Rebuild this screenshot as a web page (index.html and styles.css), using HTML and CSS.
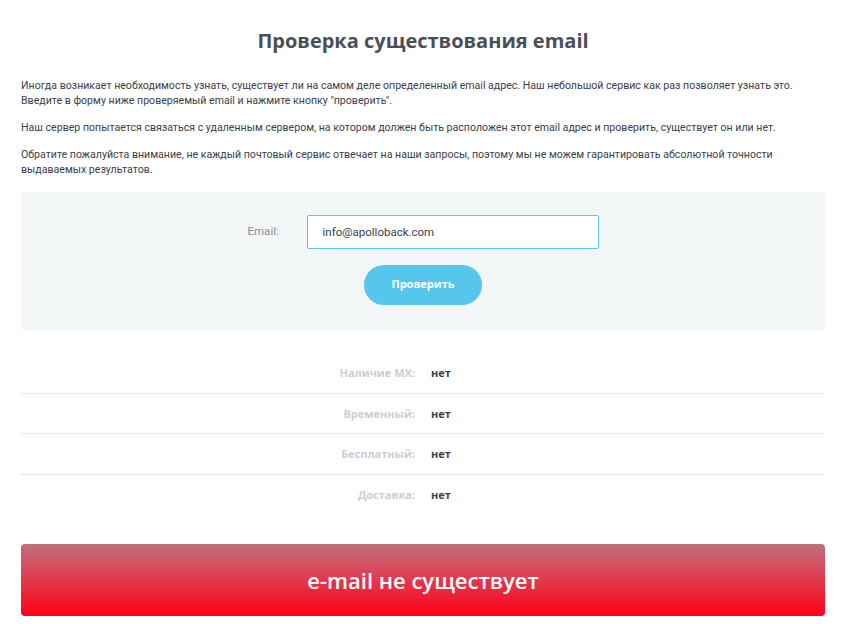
FILE: index.html
```html
<!DOCTYPE html>
<html lang="ru">
<head>
    <meta charset="UTF-8">
    <title>Проверка существования email</title>
    <link rel="stylesheet" href="styles.css">
</head>
<body>
    <div class="container">
        <h1 class="title">Проверка существования email</h1>

        <div class="intro">
            <p>Иногда возникает необходимость узнать, существует ли на самом деле определенный email адрес. Наш небольшой сервис как раз позволяет узнать это.<br>Введите в форму ниже проверяемый email и нажмите кнопку "проверить".</p>
            <p>Наш сервер попытается связаться с удаленным сервером, на котором должен быть расположен этот email адрес и проверить, существует он или нет.</p>
            <p>Обратите пожалуйста внимание, не каждый почтовый сервис отвечает на наши запросы, поэтому мы не можем гарантировать абсолютной точности выдаваемых результатов.</p>
        </div>

        <!-- Check form -->
        <form class="check-form">
            <div class="form-row">
                <label for="email">Email:</label>
                <input type="text" id="email" value="info@apolloback.com">
            </div>
            <button type="button" class="btn">Проверить</button>
        </form>

        <!-- Results -->
        <div class="results">
            <div class="result-row"><span class="result-label">Наличие MX:</span><span class="result-value">нет</span></div>
            <div class="result-row"><span class="result-label">Временный:</span><span class="result-value">нет</span></div>
            <div class="result-row"><span class="result-label">Бесплатный:</span><span class="result-value">нет</span></div>
            <div class="result-row"><span class="result-label">Доставка:</span><span class="result-value">нет</span></div>
        </div>

        <div class="verdict">e-mail не существует</div>
    </div>
</body>
</html>
```

FILE: styles.css
```css
* {
    margin: 0;
    padding: 0;
    box-sizing: border-box;
}

body {
    font-family: Roboto, 'Noto Sans', sans-serif;
    background: #fff;
    color: #3b4049;
}

.container {
    width: 804px;
    margin-left: 21px;
    padding-top: 27px;
}

.title {
    font-family: 'Open Sans', sans-serif;
    font-size: 20px;
    font-weight: 700;
    color: #4a4f57;
    text-align: center;
    line-height: 28px;
    margin-bottom: 23px;
}

.intro p {
    font-size: 10.6px;
    line-height: 15px;
    color: #3b4049;
    margin-bottom: 12px;
}

.intro p:last-child {
    margin-bottom: 13px;
}

.check-form {
    background: #f2f6f7;
    border-radius: 3px;
    margin-top: 15px;
    padding: 23px 0 25px;
    display: flex;
    flex-direction: column;
    align-items: center;
}

.form-row {
    display: flex;
    align-items: center;
    gap: 25px;
}

.form-row label {
    font-size: 11.5px;
    color: #8a8f96;
    width: 34px;
    margin-top: -2px;
}

.form-row input {
    width: 292px;
    height: 34px;
    border: 1px solid #5cc5ec;
    border-radius: 2px;
    padding: 0 15px;
    font-family: Roboto, sans-serif;
    font-size: 11.5px;
    color: #3b4049;
    background: #fff;
    outline: none;
}

.btn {
    margin-top: 16px;
    width: 118px;
    height: 40px;
    border: none;
    border-radius: 20px;
    background: #57c6ed;
    color: #fff;
    font-family: 'Open Sans', sans-serif;
    font-size: 11px;
    font-weight: 700;
    padding-bottom: 3px;
}

.results {
    margin-top: 23px;
}

.result-row {
    display: flex;
    align-items: center;
    height: 40.5px;
    border-bottom: 1px solid #e8e9eb;
    font-family: 'Open Sans', sans-serif;
    font-size: 11px;
    font-weight: 700;
}

.result-row:last-child {
    border-bottom: none;
}

.result-label {
    width: 394px;
    text-align: right;
    color: #c9ced4;
}

.result-value {
    margin-left: 16px;
    color: #3d424a;
}

.verdict {
    margin-top: 29px;
    height: 72px;
    border-radius: 4px;
    background: linear-gradient(to bottom, #c0707c 0%, #d84a5c 35%, #ff0016 100%);
    color: #fff;
    font-family: 'Open Sans', sans-serif;
    font-size: 22px;
    font-weight: 600;
    display: flex;
    align-items: center;
    justify-content: center;
}
```
